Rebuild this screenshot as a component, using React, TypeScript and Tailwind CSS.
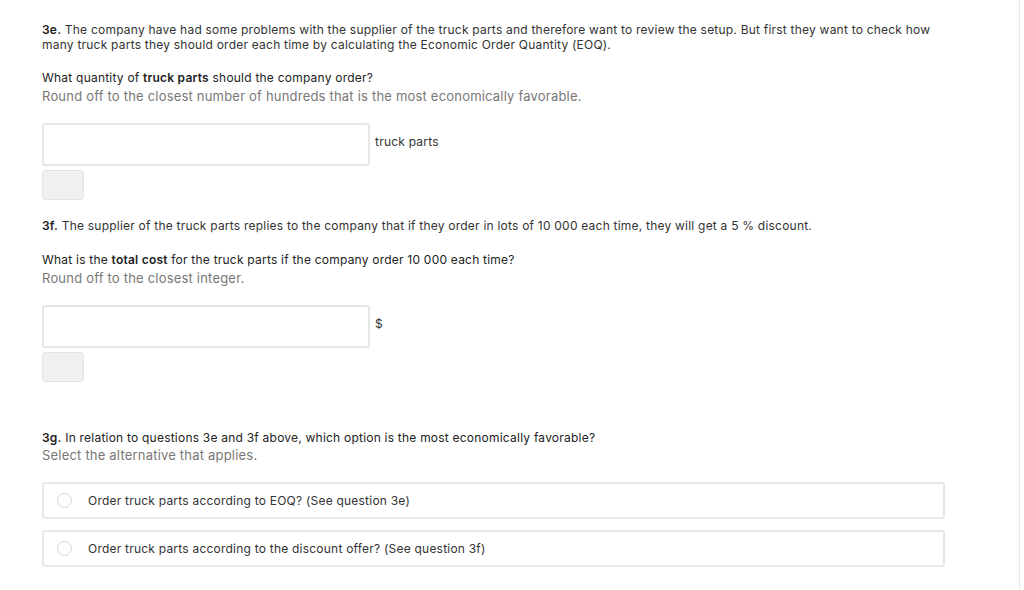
const FONT = { fontFamily: 'Inter, "Noto Sans", sans-serif' }

function AnswerInput({ unit }: { unit: string }) {
  return (
    <div className="flex flex-col gap-[4px]">
      <div className="flex items-start gap-[5px]">
        <div className="w-[328px] h-[43px] rounded-[3px] border-2 border-[#e6e6e6] bg-white" />
        <span className="pt-[11px] text-[12px] leading-[15px] tracking-[0.22px] text-[#333]">{unit}</span>
      </div>
      <div className="w-[42px] h-[30px] rounded-[4px] border border-[#e3e3e3] bg-[#f0f0f0]" />
    </div>
  )
}

function RadioOption({ label }: { label: string }) {
  return (
    <label className="flex items-center w-[903px] h-[37px] rounded-[3px] border-2 border-[#e8e8e8] bg-white pl-[13px]">
      <span className="w-[15px] h-[15px] rounded-full border border-[#d6d6d6] bg-white" />
      <span className="ml-[16px] text-[12px] tracking-[0.22px] text-[#333]">{label}</span>
    </label>
  )
}

export default function App() {
  return (
    <div className="flex h-[590px] bg-white" style={FONT}>
      <div className="w-[1020px] border-r border-[#e8e8e8] pl-[42px] pt-[22px] text-[12px] leading-[15px] tracking-[0.22px]">
        <p className="text-[#333] w-[900px]">
          <b className="font-semibold text-[#222]">3e.</b> The company have had some problems with the supplier of the truck parts and therefore want to review the setup. But first they want to check how many truck parts they should order each time by calculating the Economic Order Quantity (EOQ).
        </p>
        <p className="mt-[18px] text-[#222]">
          What quantity of <b className="font-semibold">truck parts</b> should the company order?
        </p>
        <p className="mt-[3px] text-[13px] leading-[17px] tracking-[0.2px] text-[#777]">
          Round off to the closest number of hundreds that is the most economically favorable.
        </p>
        <div className="mt-[18px]">
          <AnswerInput unit="truck parts" />
        </div>

        <p className="mt-[18px] text-[#333]">
          <b className="font-semibold text-[#222]">3f.</b> The supplier of the truck parts replies to the company that if they order in lots of 10 000 each time, they will get a 5 % discount.
        </p>
        <p className="mt-[19px] text-[#222]">
          What is the <b className="font-semibold">total cost</b> for the truck parts if the company order 10 000 each time?
        </p>
        <p className="mt-[3px] text-[13px] leading-[17px] tracking-[0.2px] text-[#777]">Round off to the closest integer.</p>
        <div className="mt-[18px]">
          <AnswerInput unit="$" />
        </div>

        <p className="mt-[48px] text-[#222]">
          <b className="font-semibold">3g.</b> In relation to questions 3e and 3f above, which option is the most economically favorable?
        </p>
        <p className="mt-[2px] text-[13px] leading-[17px] tracking-[0.2px] text-[#777]">Select the alternative that applies.</p>
        <div className="mt-[18px] flex flex-col gap-[11px]">
          <RadioOption label="Order truck parts according to EOQ? (See question 3e)" />
          <RadioOption label="Order truck parts according to the discount offer? (See question 3f)" />
        </div>
      </div>
    </div>
  )
}
